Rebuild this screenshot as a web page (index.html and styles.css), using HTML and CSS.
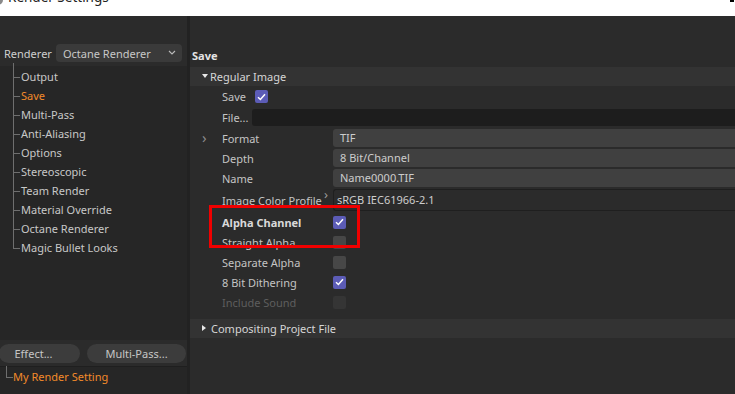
FILE: index.html
```html
<!DOCTYPE html>
<html>
<head>
<meta charset="utf-8">
<link rel="stylesheet" href="styles.css">
</head>
<body>
<div class="titlebar">
  <div class="title"><span class="ticon"></span>Render Settings</div>
  <div class="tctl"></div>
</div>
<div class="main">
  <div class="left">
    <div class="renderer-row">
      <span class="rlabel">Renderer</span>
      <div class="dropdown">
        <span>Octane Renderer</span>
        <svg class="chev" width="8" height="5" viewBox="0 0 8 5"><path d="M1 1 L4 4 L7 1" fill="none" stroke="#bbb" stroke-width="1.1"/></svg>
      </div>
    </div>
    <ul class="tree">
      <li>Output</li>
      <li class="active">Save</li>
      <li>Multi-Pass</li>
      <li>Anti-Aliasing</li>
      <li>Options</li>
      <li>Stereoscopic</li>
      <li>Team Render</li>
      <li>Material Override</li>
      <li>Octane Renderer</li>
      <li class="last">Magic Bullet Looks</li>
    </ul>
    <div class="btnbar">
      <div class="btn b1">Effect...</div>
      <div class="btn b2">Multi-Pass...</div>
    </div>
    <div class="settings">
      <div class="setitem">My Render Setting</div>
    </div>
  </div>
  <div class="sep"></div>
  <div class="right">
    <div class="rtitle">Save</div>
    <div class="group"><span class="tri-down"></span>Regular Image</div>
    <div class="rows">
      <div class="row r21 save-row"><span class="lbl short">Save</span><span class="cb on"><svg width="9" height="8" viewBox="0 0 9 8"><path d="M1 4.2 L3.4 6.5 L8 1.3" fill="none" stroke="#fff" stroke-width="1.5"/></svg></span></div>
      <div class="row r21 file-row"><span class="lbl short2">File...</span><div class="fileinput"></div></div>
      <div class="row"><span class="chevr">›</span><span class="lbl">Format</span><div class="val">TIF</div></div>
      <div class="row"><span class="lbl">Depth</span><div class="val">8 Bit/Channel</div></div>
      <div class="row"><span class="lbl">Name</span><div class="val">Name0000.TIF</div></div>
      <div class="row r24"><span class="lbl">Image Color Profile</span><span class="chevs">›</span><div class="val prof">sRGB IEC61966-2.1</div></div>
      <div class="row"><span class="lbl bold">Alpha Channel</span><span class="cb on"><svg width="9" height="8" viewBox="0 0 9 8"><path d="M1 4.2 L3.4 6.5 L8 1.3" fill="none" stroke="#fff" stroke-width="1.5"/></svg></span></div>
      <div class="row"><span class="lbl">Straight Alpha</span><span class="cb"></span></div>
      <div class="row"><span class="lbl">Separate Alpha</span><span class="cb"></span></div>
      <div class="row"><span class="lbl">8 Bit Dithering</span><span class="cb on"><svg width="9" height="8" viewBox="0 0 9 8"><path d="M1 4.2 L3.4 6.5 L8 1.3" fill="none" stroke="#fff" stroke-width="1.5"/></svg></span></div>
      <div class="row dim"><span class="lbl">Include Sound</span><span class="cb dimcb"></span></div>
    </div>
    <div class="group g2"><span class="tri-right"></span>Compositing Project File</div>
    <div class="redbox"></div>
  </div>
</div>
</body>
</html>
```
FILE: styles.css
```css
* { box-sizing: border-box; }
html, body { margin: 0; padding: 0; }
body {
  width: 735px; height: 394px; overflow: hidden;
  background: #2b2b2b;
  font-family: "Noto Sans", "Liberation Sans", sans-serif;
  font-size: 11px;
  color: #c9c9c9;
}
.titlebar {
  height: 16px; background: #fff; overflow: hidden;
  display: flex; justify-content: space-between; align-items: flex-start;
}
.title {
  font-family: "Noto Sans", sans-serif; font-size: 13.5px; color: #222;
  line-height: 20px; margin-top: -13px;
  display: flex; align-items: center;
}
.ticon {
  width: 10px; height: 10px; border-radius: 50%; background: #8a8a8a;
  margin-left: -7px; margin-right: 5px; margin-top: 6px;
}
.tctl { width: 4px; height: 2px; background: #000; margin-right: 1px; }
.main { display: flex; height: 378px; }
.left { width: 187px; display: flex; flex-direction: column; }
.sep { width: 3px; background: #222; }
.renderer-row {
  margin-top: 28px; height: 18px; display: flex; align-items: center;
  padding-left: 4px;
}
.rlabel { color: #cfcfcf; width: 52px; }
.dropdown {
  width: 126px; height: 18px; background: #3a3a3a; border-radius: 4px;
  display: flex; align-items: center; justify-content: space-between;
  padding: 0 6px 0 7px; color: #c8c8c8;
}
.chev { margin-top: -2px; }
.tree {
  list-style: none; margin: 4px 0 0 0; padding: 1px 0 0 21px;
  flex: 1; background: #262626;
}
.tree li { position: relative; line-height: 19px; height: 19px; color: #c8c8c8; }
.tree li::before {
  content: ""; position: absolute; left: -8px; top: 0; height: 19px;
  width: 7px; border-left: 1px solid #6e6e6e;
}
.tree li::after {
  content: ""; position: absolute; left: -8px; top: 10px; width: 7px;
  border-top: 1px solid #6e6e6e;
}
.tree li:first-child::before { top: -4px; height: 23px; }
.tree li.last::before { height: 10px; }
.tree li.active { color: #f28a2a; }
.btnbar {
  height: 26px; background: #2b2b2b; display: flex; align-items: center;
  gap: 7px; padding-top: 1px;
}
.btn {
  height: 19px; border-radius: 10px; background: #3c3c3c; color: #c6c6c6;
  display: flex; align-items: center; justify-content: center;
}
.b1 { width: 81px; margin-left: -1px; padding-right: 12px; }
.b2 { width: 99px; }
.settings { height: 28px; background: #262626; border-top: 1px solid #1f1f1f; padding-left: 13px; }
.setitem { position: relative; line-height: 19px; margin-top: 0; color: #f28a2a; }
.setitem::before {
  content: ""; position: absolute; left: -7px; top: -1px; width: 6px; height: 11px;
  border-left: 1px solid #6e6e6e; border-bottom: 1px solid #6e6e6e;
}
.right { flex: 1; position: relative; overflow: hidden; }
.rtitle {
  margin-top: 32px; height: 19px; line-height: 16px; padding-left: 2px;
  font-weight: bold; color: #e4e4e4;
}
.group {
  height: 19px; background: #333; display: flex; align-items: center;
  padding-left: 12px; color: #d6d6d6;
}
.tri-down {
  width: 0; height: 0; border-left: 3.5px solid transparent; border-right: 3.5px solid transparent;
  border-top: 4px solid #e8e8e8; margin-right: 2px; margin-top: -1px;
}
.tri-right {
  width: 0; height: 0; border-top: 3.5px solid transparent; border-bottom: 3.5px solid transparent;
  border-left: 4px solid #e8e8e8; margin-right: 5px; margin-top: -2px;
}
.rows { padding-top: 0; padding-bottom: 7px; }
.row { height: 20px; display: flex; align-items: center; padding-left: 32px; position: relative; }
.r21 { height: 21px; }
.r24 { height: 24px; align-items: center; }
.lbl { width: 111px; flex: none; white-space: nowrap; color: #c4c4c4; }
.lbl.short { width: 33px; }
.lbl.short2 { width: 30px; }
.lbl.bold { font-weight: bold; color: #d9d9d9; }
.dim .lbl { color: #5e5e5e; }
.chevr { position: absolute; left: 12px; top: 0; line-height: 18px; font-size: 15px; color: #8a8a8a; }
.chevs { position: absolute; left: 134px; top: 0; line-height: 12px; font-size: 13px; color: #9a9a9a; }
.val {
  flex: 1; height: 18px; background: #404040; border-radius: 3px 0 0 3px;
  padding-left: 7px; line-height: 18px; color: #cdcdcd; margin-top: -1px;
}
.val.prof {
  background: #2b2b2b; border-top: 1px solid #1f1f1f; border-bottom: 1px solid #1f1f1f;
  border-left: 1px solid #1f1f1f; padding-left: 3px; height: 22px; line-height: 20px; margin-top: 0;
}
.fileinput { flex: 1; height: 17px; background: #1d1d1d; border-radius: 3px 0 0 3px; }
.cb {
  width: 13px; height: 13px; border-radius: 2px; background: #474747;
  display: flex; align-items: center; justify-content: center;
}
.cb.on { background: #5c5cb6; }
.cb.dimcb { background: #353535; }
.g2 { margin-top: 0; }
.redbox {
  position: absolute; left: 19px; top: 189px; width: 151px; height: 43px;
  border: 3px solid #f00000;
}
```
